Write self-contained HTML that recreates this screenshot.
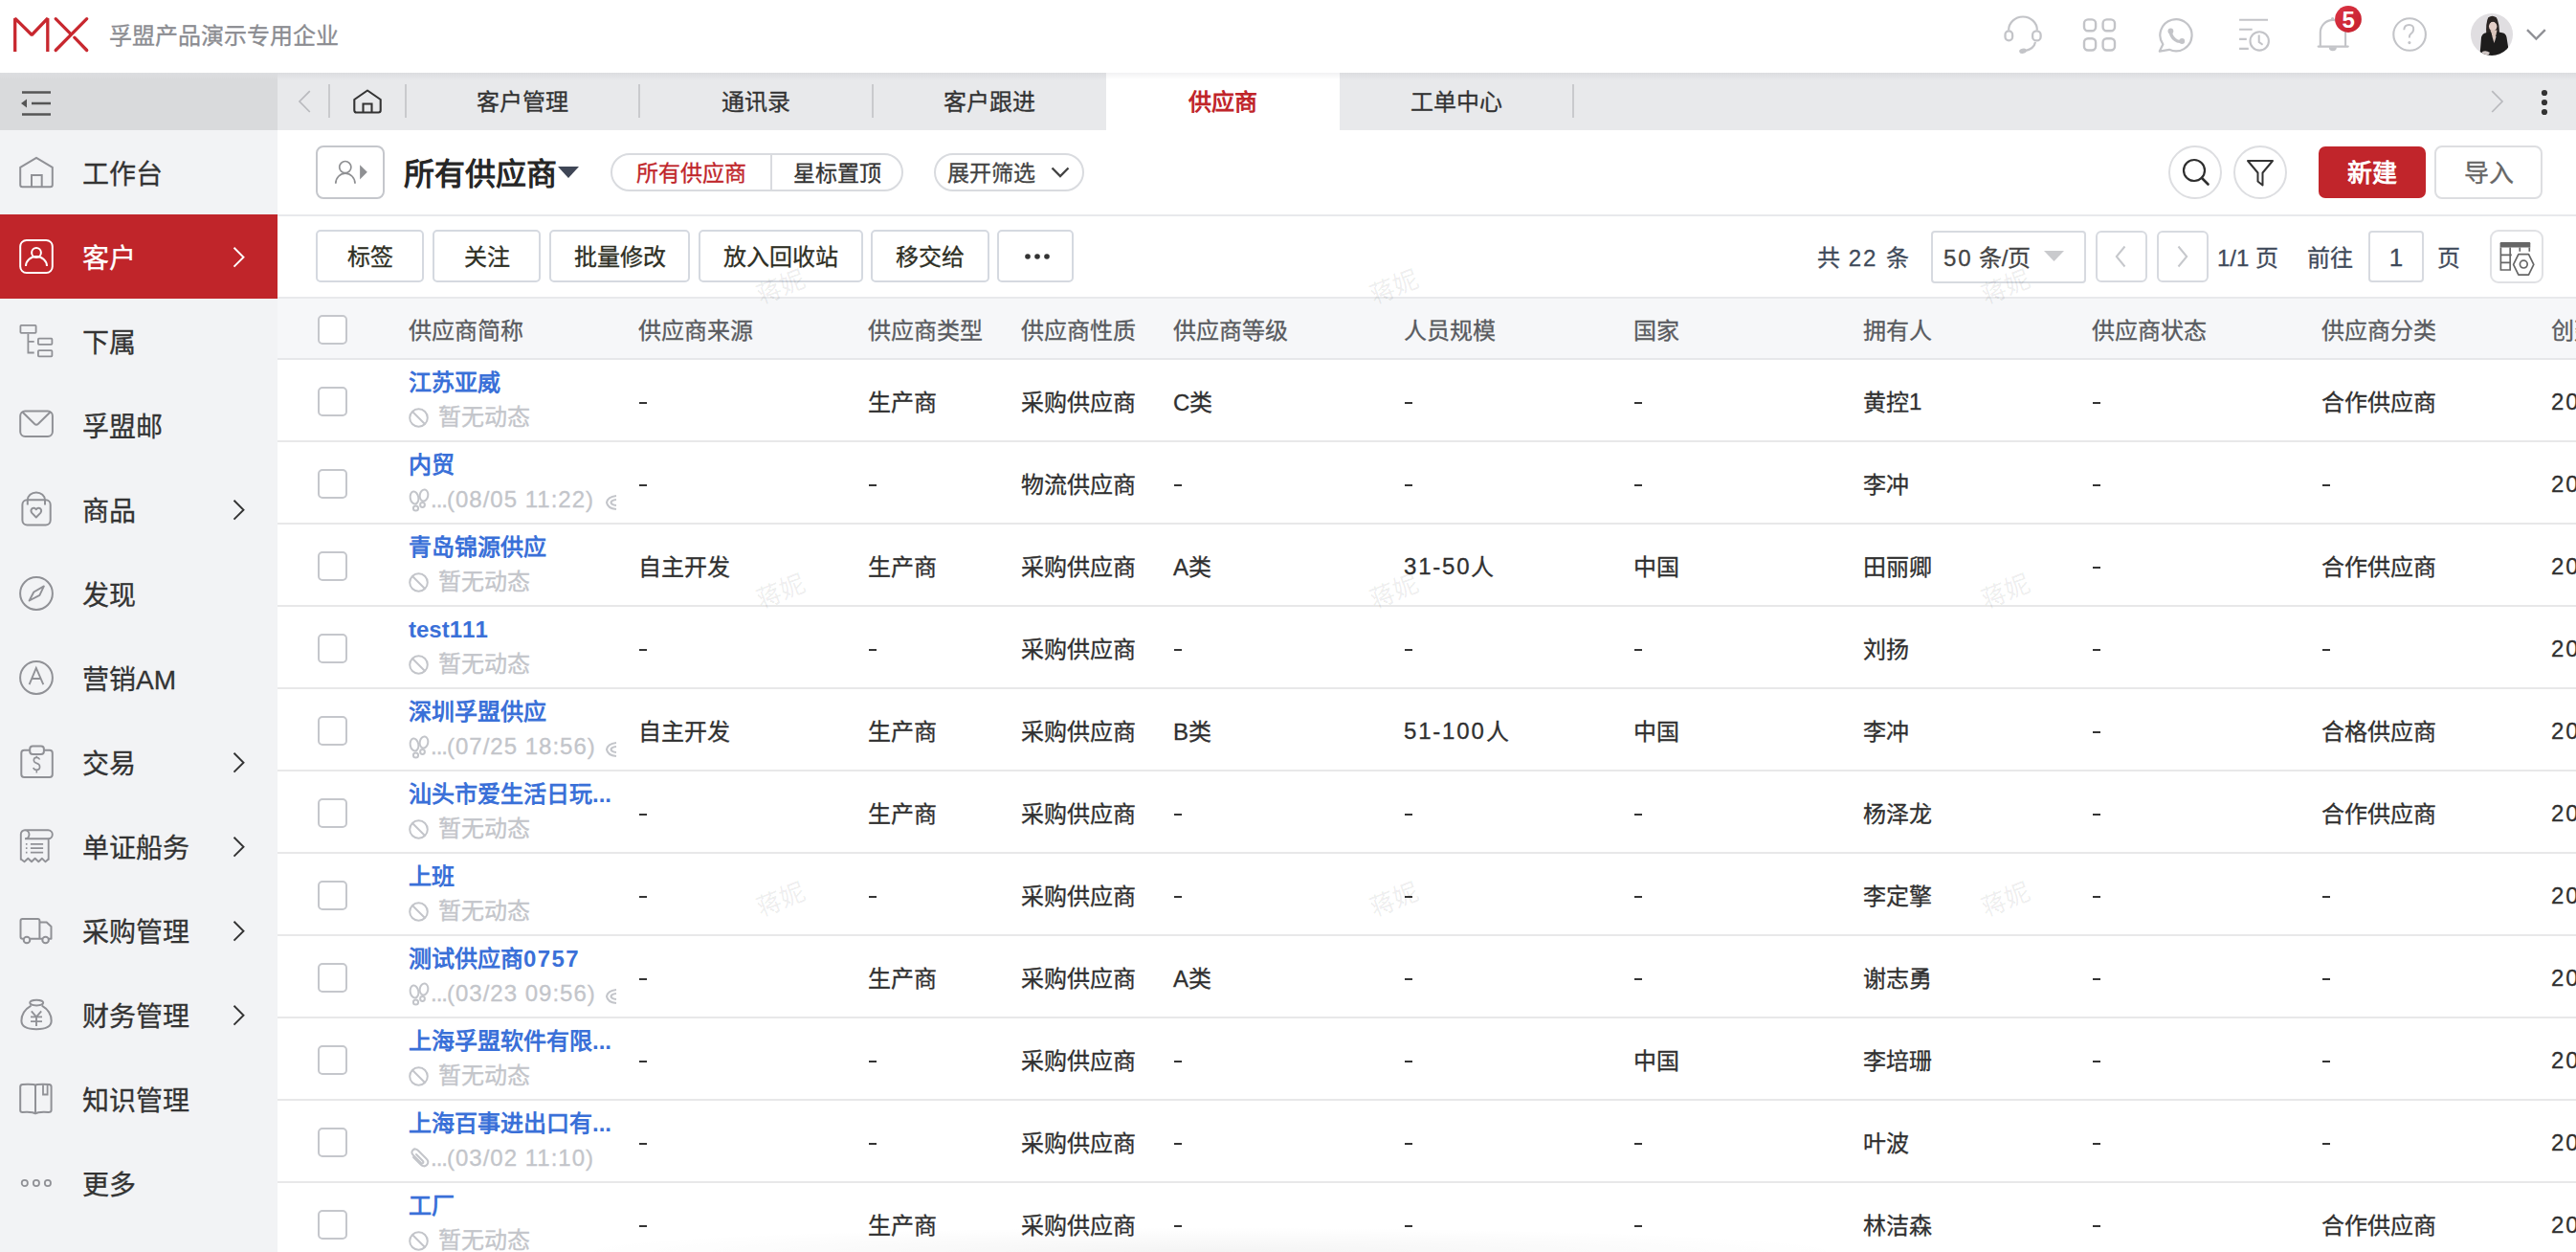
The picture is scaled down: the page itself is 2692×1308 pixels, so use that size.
<!DOCTYPE html>
<html lang="zh-CN">
<head>
<meta charset="utf-8">
<style>
*{margin:0;padding:0;box-sizing:border-box}
html,body{width:2692px;height:1308px;overflow:hidden;background:#fff;font-family:"Liberation Sans",sans-serif;color:#333;-webkit-text-stroke:0.3px currentColor}
.abs{position:absolute}
svg{display:block;overflow:visible}
#hdr{position:absolute;left:0;top:0;width:2692px;height:76px;background:#fff}
#tabs{position:absolute;left:0;top:76px;width:2692px;height:60px;background:#e8e9eb}
#tabs .lft{position:absolute;left:0;top:0;width:290px;height:60px;background:#d9dadc}
#tabs .shade{position:absolute;left:0;top:0;width:2692px;height:8px;background:linear-gradient(#dcdde0,rgba(232,233,235,0))}
.tab{position:absolute;top:1px;height:59px;width:244px;font-size:24px;line-height:60px;text-align:center;color:#333}
.sep{position:absolute;top:12px;width:2px;height:35px;background:#c9cacd}
#side{position:absolute;left:0;top:136px;width:290px;height:1172px;background:#f2f3f5}
.mi{position:absolute;left:0;width:290px;height:88px;font-size:28px;color:#333}
.mi .t{position:absolute;left:86px;top:2.5px;line-height:88px;white-space:nowrap}
.mi svg.ic{position:absolute;left:20px;top:26px}
.mi svg.ch{position:absolute;left:243px;top:34px}
.mi.on{background:#c0252a;color:#fff}

#main{position:absolute;left:290px;top:136px;width:2402px;height:1172px;background:#fff;overflow:hidden}
.pill{position:absolute;border:2px solid #d9dbdf;border-radius:22px;font-size:23px;white-space:nowrap}
.btn{position:absolute;top:104px;height:55px;border:2px solid #d5d9e0;border-radius:5px;font-size:24px;line-height:53px;text-align:center;color:#2e2f24;background:#fff}
.pg{position:absolute;font-size:24px;line-height:30px;color:#3f4a5a;white-space:nowrap;font-weight:500}
.box{position:absolute;border:2px solid #d7dae0;border-radius:5px;background:#fff}
.hd{position:absolute;font-size:24px;line-height:30px;color:#595b60;white-space:nowrap;top:19px}
.row{position:absolute;left:0;width:2402px;height:87px;border-bottom:2px solid #e8e8e9}
.dash{position:absolute;top:45px;width:8px;height:2px;background:#353535}
.cb{position:absolute;left:42px;width:31px;height:31px;border:2px solid #c5c7cc;border-radius:5px;background:#fff}
.c{position:absolute;top:31px;font-size:24px;line-height:30px;color:#303030;white-space:nowrap}
.nm{position:absolute;left:137px;top:10px;font-size:24px;line-height:30px;color:#3a70d8;font-weight:bold;white-space:nowrap}
.dyn{position:absolute;left:137px;top:46px;width:219px;height:32px;overflow:hidden;font-size:24px;line-height:30px;color:#c3c5ca;white-space:nowrap}
.wm{position:absolute;font-size:26px;color:rgba(0,0,0,0.075);transform:rotate(-21deg);white-space:nowrap}
.n2{letter-spacing:2px}.n1{letter-spacing:1px}.n18{letter-spacing:1.8px;position:relative;top:-1px}
.nm,b,[style*="font-weight:bold"]{-webkit-text-stroke:0}
</style>
</head>
<body>
<div id="hdr">
  <svg class="abs" style="left:12px;top:16px" width="84" height="40" viewBox="0 0 84 40">
    <path d="M3.7 38V3.2L21.2 20.5L37.8 3.2V38" fill="none" stroke="#c8282f" stroke-width="3.3" stroke-linejoin="bevel"/>
    <path d="M78.7 3.7L46.2 36.5" fill="none" stroke="#c8282f" stroke-width="3.3" stroke-linecap="round"/>
    <path d="M46.2 3.7L61.3 18.8M65.8 23.2L78.7 36.5" fill="none" stroke="#c8282f" stroke-width="3.3" stroke-linecap="round"/>
  </svg>
  <div class="abs" style="left:114px;top:20px;font-size:24px;line-height:36px;color:#8b8c91;white-space:nowrap">孚盟产品演示专用企业</div>
  <svg class="abs" style="left:2092px;top:16px" width="44" height="42" viewBox="0 0 44 42">
    <path d="M7.1 15.5A14.9 14 0 0 1 36.9 15.5" stroke="#c3c4c8" stroke-width="2.2" fill="none"/>
    <rect x="3.5" y="16.4" width="7.6" height="10" rx="3.8" stroke="#c3c4c8" stroke-width="2.3" fill="none"/>
    <rect x="32.1" y="16.4" width="8.5" height="10" rx="4" stroke="#c3c4c8" stroke-width="2.3" fill="none"/>
    <path d="M35 28Q33.5 35 25 36.8" stroke="#c3c4c8" stroke-width="2.2" fill="none"/>
    <ellipse cx="22" cy="37.2" rx="3.9" ry="2.6" fill="#c3c4c8" transform="rotate(-12 22 37.2)"/>
  </svg>
  <svg class="abs" style="left:2175px;top:18px" width="38" height="38" viewBox="0 0 38 38">
    <rect x="3" y="2.4" width="12.1" height="11.9" rx="4" stroke="#c3c4c8" stroke-width="2.4" fill="none"/>
    <rect x="22.6" y="2.4" width="12.4" height="11.9" rx="4" stroke="#c3c4c8" stroke-width="2.4" fill="none"/>
    <rect x="3" y="22.2" width="12.1" height="12.3" rx="4" stroke="#c3c4c8" stroke-width="2.4" fill="none"/>
    <rect x="22.6" y="22.2" width="12.4" height="12.3" rx="4" stroke="#c3c4c8" stroke-width="2.4" fill="none"/>
  </svg>
  <svg class="abs" style="left:2255px;top:18px" width="38" height="38" viewBox="0 0 38 38">
    <path d="M5.4 28.3A16.6 16.6 0 1 1 12 33.8L1.8 35.6Z" stroke="#c3c4c8" stroke-width="2.2" fill="none" stroke-linejoin="round"/>
    <path d="M13.3 14.6Q13.5 20 18 23.5Q21.5 26.2 25.2 25" stroke="#c3c4c8" stroke-width="3.4" fill="none"/>
    <circle cx="13.4" cy="14.4" r="2.9" fill="#c3c4c8"/><circle cx="25.3" cy="25" r="2.9" fill="#c3c4c8"/>
  </svg>
  <svg class="abs" style="left:2339px;top:18px" width="36" height="38" viewBox="0 0 36 38">
    <path d="M1.1 2.8H31M1.1 12.8H14.7M1.1 22.9H8.8M1.1 32.9H10.8" stroke="#c3c4c8" stroke-width="2.1" fill="none"/>
    <circle cx="22.2" cy="24.9" r="9.7" stroke="#c3c4c8" stroke-width="2.1" fill="none"/>
    <path d="M21.7 18.6V25.9L25.6 28.7" stroke="#c3c4c8" stroke-width="2" fill="none"/>
  </svg>
  <svg class="abs" style="left:2420px;top:16px" width="40" height="40" viewBox="0 0 40 40">
    <path d="M4.8 32.6V18A13.15 13.15 0 0 1 31.1 18V32.6" stroke="#c3c4c8" stroke-width="2.1" fill="none"/>
    <path d="M2.7 32.6H33.7" stroke="#c3c4c8" stroke-width="2.3" stroke-linecap="round"/>
    <path d="M13.8 33.2A4.05 4.05 0 0 0 21.9 33.2Z" fill="#c3c4c8"/>
    <circle cx="17.6" cy="3.6" r="1.6" fill="#c3c4c8"/>
  </svg>
  <svg class="abs" style="left:2439px;top:5px" width="30" height="30" viewBox="0 0 30 30"><defs><linearGradient id="bg5" x1="0" y1="0" x2="1" y2="1"><stop offset="0" stop-color="#dc3545"/><stop offset="1" stop-color="#c41f2c"/></linearGradient></defs><circle cx="15" cy="15" r="13.9" fill="url(#bg5)"/><text x="15.2" y="24.2" font-size="24" font-weight="bold" text-anchor="middle" fill="#fff" font-family="Liberation Sans">5</text></svg>
  <svg class="abs" style="left:2498px;top:16px" width="40" height="40" viewBox="0 0 40 40">
    <circle cx="20.1" cy="20" r="16.8" stroke="#c3c4c8" stroke-width="2.1" fill="none"/>
    <path d="M14.3 15.3Q14.5 9.9 19.6 9.9Q24.3 10 24.2 14.6Q24.1 17.5 21.2 19.5Q19.8 20.6 19.8 23.4" stroke="#c3c4c8" stroke-width="2" fill="none"/>
    <circle cx="19.9" cy="28.6" r="1.55" fill="#c3c4c8"/>
  </svg>
  <svg class="abs" style="left:2582px;top:14px" width="44" height="44" viewBox="0 0 44 44">
    <defs><clipPath id="av"><circle cx="22" cy="22" r="22"/></clipPath></defs>
    <g clip-path="url(#av)">
      <rect width="44" height="44" fill="#e0dee1"/>
      <path d="M16.3 24Q15.5 9 18.3 4.3Q22.5 1.3 26.8 4.3Q30 9 30 24Z" fill="#2b2523"/>
      <ellipse cx="23.2" cy="13.6" rx="4.2" ry="4.9" fill="#e4cfc8"/>
      <path d="M18.6 12.5Q19 5.5 23 5Q27.5 5.5 27.9 12.5Q26 8.5 23 8.3Q20 8.5 18.6 12.5Z" fill="#2b2523"/>
      <path d="M20.5 17.5H27.5L24.5 31Z" fill="#d9c4ba"/>
      <path d="M9.5 44L11 25Q12 21 16 20.2L21 19.2L24.5 31L28 19.2L33 20.2Q36.8 21 37.5 25L40.5 44Z" fill="#1d1c1c"/>
      <path d="M12 40Q16 38 20 41L18 44H11Z" fill="#cfc6c4"/>
    </g>
  </svg>
  <svg class="abs" style="left:2640px;top:30px" width="21" height="13" viewBox="0 0 21 13"><path d="M1 1.2L10.4 10.6L19.8 1.2" stroke="#909196" stroke-width="2.4" fill="none"/></svg>
</div>
<div id="tabs">
  <div class="lft"></div>
  <div class="shade"></div>
  <svg class="abs" style="left:22px;top:95px;top:19px" width="32" height="26" viewBox="0 0 32 26">
    <path d="M1 1.5H31M11 13H31M1 24.5H31" stroke="#555" stroke-width="2.6" fill="none"/>
    <path d="M0 13L6 8.5V17.5Z" fill="#555"/>
  </svg>
  <svg class="abs" style="left:312px;top:18px" width="14" height="24" viewBox="0 0 14 24"><path d="M11.8 1.2L1 12L11.8 23" stroke="#b9babe" stroke-width="1.7" fill="none"/></svg>
  <div class="sep" style="left:343px"></div>
  <svg class="abs" style="left:369px;top:17px" width="31" height="26" viewBox="0 0 31 26"><path d="M1.3 11L15 1.5L28.7 11V22.3Q28.7 24.5 26.5 24.5H3.5Q1.3 24.5 1.3 22.3Z" stroke="#333" stroke-width="2.1" fill="none" stroke-linejoin="round"/><path d="M10.5 24.5V15.5H19.5V24.5" stroke="#333" stroke-width="2.1" fill="none"/></svg>
  <div class="sep" style="left:423px"></div>
  <div class="tab" style="left:424px">客户管理</div>
  <div class="sep" style="left:667px"></div>
  <div class="tab" style="left:668px">通讯录</div>
  <div class="sep" style="left:911px"></div>
  <div class="tab" style="left:912px">客户跟进</div>
  <div class="tab" style="left:1156px;top:0;height:60px;line-height:62px;background:linear-gradient(#f1f1f3,#fff 7px);color:#c0252a;font-weight:bold">供应商</div>
  <div class="tab" style="left:1400px">工单中心</div>
  <div class="sep" style="left:1643px"></div>
  <svg class="abs" style="left:2603px;top:18px" width="14" height="24" viewBox="0 0 14 24"><path d="M1.2 1.2L12 12L1.2 23" stroke="#b9babe" stroke-width="1.7" fill="none"/></svg>
  <svg class="abs" style="left:2655px;top:17px" width="8" height="28" viewBox="0 0 8 28"><circle cx="4" cy="4" r="3.1" fill="#333"/><circle cx="4" cy="14" r="3.1" fill="#333"/><circle cx="4" cy="24" r="3.1" fill="#333"/></svg>
</div>
<div id="side">
<div class="mi" style="top:0px"><svg class="ic" width="36" height="36" viewBox="0 0 36 36"><path d="M1.2 12.8L18 2.8L34.8 12.8V31Q34.8 33.2 32.6 33.2H3.4Q1.2 33.2 1.2 31Z" stroke="#909196" stroke-width="2" fill="none" stroke-linejoin="round"/><path d="M13 33.2V21H23.7V33.2" stroke="#909196" stroke-width="2" fill="none"/></svg><div class="t">工作台</div></div>
<div class="mi on" style="top:88px"><svg class="ic" width="36" height="36" viewBox="0 0 36 36"><rect x="1.2" y="1" width="33.6" height="34" rx="6.5" stroke="#fff" stroke-width="2" fill="none"/><circle cx="18" cy="14" r="4.9" stroke="#fff" stroke-width="2" fill="none"/><path d="M7 28A11 10 0 0 1 29 28" stroke="#fff" stroke-width="2" fill="none"/></svg><div class="t">客户</div><svg class="ch" width="14" height="22" viewBox="0 0 14 22"><path d="M1.5 0.8L11.5 10.7L1.5 20.6" stroke="#fff" stroke-width="1.9" fill="none"/></svg></div>
<div class="mi" style="top:176px"><svg class="ic" width="36" height="36" viewBox="0 0 36 36"><rect x="1.4" y="1.9" width="16.2" height="7.9" rx="0.8" stroke="#909196" stroke-width="1.8" fill="none"/><rect x="19.9" y="15.6" width="14.5" height="6.2" rx="0.8" stroke="#909196" stroke-width="1.8" fill="none"/><rect x="19.9" y="28.2" width="14.5" height="6.2" rx="0.8" stroke="#909196" stroke-width="1.8" fill="none"/><path d="M9.4 10.7V30.5H15.7M9.4 18.8H15.7" stroke="#909196" stroke-width="1.8" fill="none"/></svg><div class="t">下属</div></div>
<div class="mi" style="top:264px"><svg class="ic" width="36" height="36" viewBox="0 0 36 36"><rect x="1.2" y="3.4" width="33.7" height="26.7" rx="5" stroke="#909196" stroke-width="2" fill="none"/><path d="M3.5 4.5L16 16.8Q18 18.6 20 16.8L32.5 4.5" stroke="#909196" stroke-width="2" fill="none"/></svg><div class="t">孚盟邮</div></div>
<div class="mi" style="top:352px"><svg class="ic" width="36" height="36" viewBox="0 0 36 36"><rect x="3.4" y="8.2" width="29.3" height="26.3" rx="5" stroke="#909196" stroke-width="2" fill="none"/><path d="M8.8 13.4V8.5A9.1 8 0 0 1 27 8.5V13.4" stroke="#909196" stroke-width="2" fill="none"/><path d="M17.8 26.5L13.3 21.8Q11.6 19.6 13.2 17.6Q15.6 15.6 17.8 18.3Q20 15.6 22.4 17.6Q24 19.6 22.3 21.8Z" stroke="#909196" stroke-width="1.9" fill="none" stroke-linejoin="round"/></svg><div class="t">商品</div><svg class="ch" width="14" height="22" viewBox="0 0 14 22"><path d="M1.5 0.8L11.5 10.7L1.5 20.6" stroke="#333" stroke-width="1.9" fill="none"/></svg></div>
<div class="mi" style="top:440px"><svg class="ic" width="36" height="36" viewBox="0 0 36 36"><circle cx="18" cy="18" r="16.9" stroke="#909196" stroke-width="2" fill="none"/><path d="M10.6 25.5L15.3 16.5L25.9 10.4L21.4 19.9Z" stroke="#909196" stroke-width="1.9" fill="none" stroke-linejoin="round"/></svg><div class="t">发现</div></div>
<div class="mi" style="top:528px"><svg class="ic" width="36" height="36" viewBox="0 0 36 36"><circle cx="18" cy="18" r="16.9" stroke="#909196" stroke-width="2" fill="none"/><path d="M10.6 25.2L17.8 7.9L25.3 25.2M12.8 19H23" stroke="#909196" stroke-width="1.9" fill="none"/></svg><div class="t">营销AM</div></div>
<div class="mi" style="top:616px"><svg class="ic" width="36" height="36" viewBox="0 0 36 36"><rect x="2.3" y="5.7" width="32.5" height="28.3" rx="3" stroke="#909196" stroke-width="2" fill="none"/><rect x="11.2" y="1.4" width="14.7" height="8.6" rx="3" stroke="#909196" stroke-width="2" fill="#f2f3f5"/><path d="M21.6 15.5Q20.5 13.3 18.2 13.4Q15.2 13.6 15.3 16.3Q15.5 18.7 18.3 19.4Q21.6 20.3 21.6 23.2Q21.5 26.3 18.2 26.4Q15.5 26.4 14.8 24M18.3 11.8V13.4M18.3 26.4V29.5" stroke="#909196" stroke-width="1.6" fill="none"/></svg><div class="t">交易</div><svg class="ch" width="14" height="22" viewBox="0 0 14 22"><path d="M1.5 0.8L11.5 10.7L1.5 20.6" stroke="#333" stroke-width="1.9" fill="none"/></svg></div>
<div class="mi" style="top:704px"><svg class="ic" width="36" height="36" viewBox="0 0 36 36"><path d="M1.8 32.5V5.5A4.2 4.2 0 0 1 6 1.3H30.3A4.5 4.5 0 0 1 30.3 10.3H8M6 1.3A4.5 4.5 0 0 1 6 10.3H8M30.7 10.3V32.5" stroke="#909196" stroke-width="1.9" fill="none"/><path d="M1.8 31.5L5.5 34.3L9.3 30.8L13 34.3L16.6 30.8L20.3 34.3L24 30.8L27.5 34.3L30.7 31.5" stroke="#909196" stroke-width="1.9" fill="none" stroke-linejoin="round"/><path d="M6.9 15.8H8.5M11.9 15.8H25.1M6.9 20.1H8.5M11.9 20.1H25.1M6.9 24.6H8.5M11.9 24.6H25.1" stroke="#909196" stroke-width="1.8" fill="none"/></svg><div class="t">单证船务</div><svg class="ch" width="14" height="22" viewBox="0 0 14 22"><path d="M1.5 0.8L11.5 10.7L1.5 20.6" stroke="#333" stroke-width="1.9" fill="none"/></svg></div>
<div class="mi" style="top:792px"><svg class="ic" width="36" height="36" viewBox="0 0 36 36"><path d="M21.4 26.8H3.5Q1.5 26.8 1.5 24.8V8Q1.5 6 3.5 6H19.4Q21.4 6 21.4 8V26.8M21.4 9.5H28.7L33.5 14V26.8H31M21.4 26.8H24" stroke="#909196" stroke-width="2" fill="none" stroke-linejoin="round"/><circle cx="8" cy="28" r="3.3" stroke="#909196" stroke-width="2" fill="#f2f3f5"/><circle cx="27.6" cy="28" r="3.3" stroke="#909196" stroke-width="2" fill="#f2f3f5"/></svg><div class="t">采购管理</div><svg class="ch" width="14" height="22" viewBox="0 0 14 22"><path d="M1.5 0.8L11.5 10.7L1.5 20.6" stroke="#333" stroke-width="1.9" fill="none"/></svg></div>
<div class="mi" style="top:880px"><svg class="ic" width="36" height="36" viewBox="0 0 36 36"><ellipse cx="18.2" cy="5.6" rx="7" ry="2.9" stroke="#909196" stroke-width="1.9" fill="none"/><path d="M12.5 8.6Q2.4 14.5 2.4 24.5Q2.6 33.2 18 33.2Q33.5 33.2 33.7 24.5Q33.7 14.5 23.8 8.6" stroke="#909196" stroke-width="2" fill="none"/><path d="M12.8 14.3L18 20.3L23.2 14.3M18 20.3V30M12 20.4H24M12 25.1H24" stroke="#909196" stroke-width="1.9" fill="none"/></svg><div class="t">财务管理</div><svg class="ch" width="14" height="22" viewBox="0 0 14 22"><path d="M1.5 0.8L11.5 10.7L1.5 20.6" stroke="#333" stroke-width="1.9" fill="none"/></svg></div>
<div class="mi" style="top:968px"><svg class="ic" width="36" height="36" viewBox="0 0 36 36"><path d="M17 33.3V5Q17 3.3 15 3.1Q9 2.6 3.5 3.1Q1.2 3.4 1.2 5.5V30Q1.2 32 3.5 32Q10 31.5 14 32.3Q17 33.2 17 33.3Q17 33.2 20 32.3Q24 31.5 30.5 32Q33.6 32 33.6 30V5.5Q33.6 3.4 31.3 3.1Q25 2.6 19 3.1Q17 3.3 17 5" stroke="#909196" stroke-width="2" fill="none" stroke-linejoin="round"/><path d="M25 3.2V13.5H29.6V3.2" stroke="#909196" stroke-width="1.8" fill="none"/></svg><div class="t">知识管理</div></div>
<div class="mi" style="top:1056px"><svg class="ic" width="36" height="36" viewBox="0 0 36 36"><circle cx="5.8" cy="18" r="3.1" stroke="#909196" stroke-width="1.8" fill="none"/><circle cx="17.9" cy="18" r="3.1" stroke="#909196" stroke-width="1.8" fill="none"/><circle cx="29.9" cy="18" r="3.1" stroke="#909196" stroke-width="1.8" fill="none"/></svg><div class="t">更多</div></div>
</div>
<div id="main">
  <!-- toolbar 1 -->
  <div class="box" style="left:40px;top:16px;width:72px;height:56px;border-color:#c5c7cc;border-radius:8px">
    <svg class="abs" style="left:18px;top:14px" width="36" height="26" viewBox="0 0 36 26"><circle cx="10.8" cy="6.6" r="6.1" stroke="#8f9093" stroke-width="1.7" fill="none"/><path d="M0.8 23.7A10.1 10.5 0 0 1 21 23.7" stroke="#8f9093" stroke-width="1.7" fill="none"/><path d="M26.1 4.3L33.8 11.8L26.1 19.4Z" fill="#8f9093"/></svg>
  </div>
  <div class="abs" style="left:132px;top:16px;font-size:32px;line-height:60px;font-weight:bold;color:#262626;white-space:nowrap">所有供应商</div>
  <svg class="abs" style="left:293px;top:38px" width="22" height="12" viewBox="0 0 22 12"><path d="M0 0H22L11 12Z" fill="#3f4656"/></svg>
  <div class="pill" style="left:348px;top:24px;width:306px;height:40px">
    <div class="abs" style="left:0;top:1px;width:165px;height:36px;line-height:36px;text-align:center;color:#c0252a">所有供应商</div>
    <div class="abs" style="left:165px;top:0;width:2px;height:36px;background:#d9dbdf"></div>
    <div class="abs" style="left:167px;top:1px;width:135px;height:36px;line-height:36px;text-align:center;color:#333">星标置顶</div>
  </div>
  <div class="pill" style="left:686px;top:24px;width:157px;height:40px">
    <div class="abs" style="left:12px;top:1px;line-height:36px;color:#444">展开筛选</div>
    <svg class="abs" style="left:120px;top:12px" width="20" height="12" viewBox="0 0 20 12"><path d="M1.5 1.5L10 10L18.5 1.5" stroke="#444" stroke-width="2.4" fill="none"/></svg>
  </div>
  <div class="box" style="left:1976px;top:16px;width:56px;height:56px;border-radius:28px;border-color:#dddee1"></div>
  <svg class="abs" style="left:1991px;top:31px" width="30" height="30" viewBox="0 0 30 30"><circle cx="12" cy="11" r="11" stroke="#2e2e2e" stroke-width="2.2" fill="none"/><path d="M20 19L26.5 25.5" stroke="#2e2e2e" stroke-width="2.6" fill="none" stroke-linecap="round"/></svg>
  <div class="box" style="left:2044px;top:16px;width:56px;height:56px;border-radius:28px;border-color:#dddee1"></div>
  <svg class="abs" style="left:2058px;top:31px" width="28" height="28" viewBox="0 0 28 28"><path d="M1 1H27L16.5 13.5V26.5L11.5 22.5V13.5Z" stroke="#333" stroke-width="2" fill="none" stroke-linejoin="round"/></svg>
  <div class="abs" style="left:2133px;top:17px;width:112px;height:54px;border-radius:7px;background:#c1252b;color:#fff;font-weight:bold;font-size:26px;line-height:56px;text-align:center">新建</div>
  <div class="box" style="left:2254px;top:16px;width:113px;height:56px;border-radius:8px;border-color:#dddee1;font-size:26px;line-height:54px;text-align:center;color:#666">导入</div>
  <div class="abs" style="left:0;top:88px;width:2402px;height:2px;background:#e8e9ec"></div>
  <!-- toolbar 2 -->
  <div class="btn" style="left:40px;width:113px">标签</div>
  <div class="btn" style="left:162px;width:113px">关注</div>
  <div class="btn" style="left:284px;width:147px">批量修改</div>
  <div class="btn" style="left:440px;width:172px">放入回收站</div>
  <div class="btn" style="left:620px;width:124px">移交给</div>
  <div class="btn" style="left:752px;width:80px"><svg class="abs" style="left:27px;top:23px" width="26" height="6" viewBox="0 0 26 6"><circle cx="3" cy="3" r="2.8" fill="#333"/><circle cx="13" cy="3" r="2.8" fill="#333"/><circle cx="23" cy="3" r="2.8" fill="#333"/></svg></div>
  <div class="pg" style="left:1609px;top:119px">共<span class="n2"> 22 </span>条</div>
  <div class="box" style="left:1728px;top:105px;width:162px;height:55px;border-radius:4px"></div>
  <div class="pg" style="left:1741px;top:119px;color:#444"><span class="n2">50</span><span style="margin-left:6px">条/页</span></div>
  <svg class="abs" style="left:1846px;top:126px" width="21" height="11" viewBox="0 0 21 11"><path d="M0 0H21L10.5 11Z" fill="#c9cacd"/></svg>
  <div class="box" style="left:1900px;top:105px;width:54px;height:54px;border-radius:6px"></div>
  <svg class="abs" style="left:1920px;top:120px" width="12" height="24" viewBox="0 0 12 24"><path d="M10.5 1.5L1.8 12L10.5 22.5" stroke="#c6c8cc" stroke-width="2" fill="none"/></svg>
  <div class="box" style="left:1964px;top:105px;width:54px;height:54px;border-radius:6px"></div>
  <svg class="abs" style="left:1985px;top:120px" width="12" height="24" viewBox="0 0 12 24"><path d="M1.5 1.5L10.2 12L1.5 22.5" stroke="#c6c8cc" stroke-width="2" fill="none"/></svg>
  <div class="pg" style="left:2027px;top:119px">1/1 页</div>
  <div class="pg" style="left:2121px;top:119px">前往</div>
  <div class="box" style="left:2185px;top:105px;width:58px;height:54px;border-radius:4px;font-size:26px;line-height:52px;text-align:center;color:#3f4a5a">1</div>
  <div class="pg" style="left:2257px;top:119px">页</div>
  <div class="box" style="left:2312px;top:104px;width:56px;height:56px;border-radius:9px;border-color:#e0e1e4"></div>
  <svg class="abs" style="left:2322px;top:117px" width="40" height="40" viewBox="0 0 40 40"><path d="M0.6 1.2Q0.6 0.1 1.8 0.1H31.3Q32.3 0.1 32.3 1.2V5.6H0.6Z" fill="#666"/><path d="M1.4 5.5V29H11.2V5.5M1.4 13.4H12.8M1.4 21.3H11.8M21.3 5.5V9.8M31.3 5.5V9.8" stroke="#666" stroke-width="1.7" fill="none"/><path d="M14.6 23.4L19.9 12.7H30.5L35.8 23.4L30.5 34.1H19.9Z" stroke="#666" stroke-width="1.7" fill="#fff" stroke-linejoin="round"/><circle cx="25.3" cy="23.1" r="3.9" stroke="#666" stroke-width="1.7" fill="none"/></svg>
  <div class="abs" style="left:0;top:174px;width:2402px;height:2px;background:#e8e9ec"></div>
  <!-- table -->

  <div class="abs" style="left:0;top:176px;width:2402px;height:64px;background:#f6f7f9;border-bottom:2px solid #e6e7ea">
    <div class="cb" style="top:17px"></div>
    <div class="hd" style="left:137px">供应商简称</div>
    <div class="hd" style="left:377px">供应商来源</div>
    <div class="hd" style="left:617px">供应商类型</div>
    <div class="hd" style="left:777px">供应商性质</div>
    <div class="hd" style="left:936px">供应商等级</div>
    <div class="hd" style="left:1177px">人员规模</div>
    <div class="hd" style="left:1417px">国家</div>
    <div class="hd" style="left:1657px">拥有人</div>
    <div class="hd" style="left:1896px">供应商状态</div>
    <div class="hd" style="left:2136px">供应商分类</div>
    <div class="hd" style="left:2376px">创建时间</div>
  </div>
<div class="row" style="top:239px"><div class="cb" style="top:29px"></div><div class="nm">江苏亚威</div><div class="dyn"><svg class="abs" style="left:0;top:5px" width="21" height="21" viewBox="0 0 21 21"><circle cx="10.5" cy="10.5" r="9.3" stroke="#c3c5ca" stroke-width="2" fill="none"/><path d="M4 4L17 17" stroke="#c3c5ca" stroke-width="2"/></svg><span style="position:absolute;left:31px;top:0">暂无动态</span></div><div class="dash" style="left:378px"></div><div class="c" style="left:617px">生产商</div><div class="c" style="left:777px">采购供应商</div><div class="c" style="left:936px">C类</div><div class="dash" style="left:1178px"></div><div class="dash" style="left:1418px"></div><div class="c" style="left:1657px">黄控<span class="n18">1</span></div><div class="dash" style="left:1897px"></div><div class="c" style="left:2136px">合作供应商</div><div class="c" style="left:2376px"><span class="n18">2021</span></div></div>
<div class="row" style="top:325px"><div class="cb" style="top:29px"></div><div class="nm">内贸</div><div class="dyn"><svg class="abs" style="left:0;top:4px" width="22" height="24" viewBox="0 0 22 24"><ellipse cx="6" cy="9" rx="4.3" ry="6.5" stroke="#c3c5ca" stroke-width="2" fill="none" transform="rotate(-10 6 9)"/><ellipse cx="16" cy="6.5" rx="4.3" ry="6" stroke="#c3c5ca" stroke-width="2" fill="none" transform="rotate(10 16 6.5)"/><circle cx="7.5" cy="20" r="2.6" stroke="#c3c5ca" stroke-width="2" fill="none"/><circle cx="14.5" cy="16.5" r="2.4" stroke="#c3c5ca" stroke-width="2" fill="none"/></svg><span style="position:absolute;left:23px;top:0;letter-spacing:1px"><span style="letter-spacing:-1px">...</span>(08/05 11:22)</span><svg class="abs" style="left:205px;top:9px" width="20" height="18" viewBox="0 0 20 18"><path d="M12 2Q3 3 2 9Q3 15 12 16M12 6Q7 6.5 6.5 9Q7 11.5 12 12" stroke="#c3c5ca" stroke-width="2" fill="none"/></svg></div><div class="dash" style="left:378px"></div><div class="dash" style="left:618px"></div><div class="c" style="left:777px">物流供应商</div><div class="dash" style="left:937px"></div><div class="dash" style="left:1178px"></div><div class="dash" style="left:1418px"></div><div class="c" style="left:1657px">李冲</div><div class="dash" style="left:1897px"></div><div class="dash" style="left:2137px"></div><div class="c" style="left:2376px"><span class="n18">2021</span></div></div>
<div class="row" style="top:411px"><div class="cb" style="top:29px"></div><div class="nm">青岛锦源供应</div><div class="dyn"><svg class="abs" style="left:0;top:5px" width="21" height="21" viewBox="0 0 21 21"><circle cx="10.5" cy="10.5" r="9.3" stroke="#c3c5ca" stroke-width="2" fill="none"/><path d="M4 4L17 17" stroke="#c3c5ca" stroke-width="2"/></svg><span style="position:absolute;left:31px;top:0">暂无动态</span></div><div class="c" style="left:377px">自主开发</div><div class="c" style="left:617px">生产商</div><div class="c" style="left:777px">采购供应商</div><div class="c" style="left:936px">A类</div><div class="c" style="left:1177px"><span class="n18">31-50</span>人</div><div class="c" style="left:1417px">中国</div><div class="c" style="left:1657px">田丽卿</div><div class="dash" style="left:1897px"></div><div class="c" style="left:2136px">合作供应商</div><div class="c" style="left:2376px"><span class="n18">2021</span></div></div>
<div class="row" style="top:497px"><div class="cb" style="top:29px"></div><div class="nm">test<span style="letter-spacing:1.4px">111</span></div><div class="dyn"><svg class="abs" style="left:0;top:5px" width="21" height="21" viewBox="0 0 21 21"><circle cx="10.5" cy="10.5" r="9.3" stroke="#c3c5ca" stroke-width="2" fill="none"/><path d="M4 4L17 17" stroke="#c3c5ca" stroke-width="2"/></svg><span style="position:absolute;left:31px;top:0">暂无动态</span></div><div class="dash" style="left:378px"></div><div class="dash" style="left:618px"></div><div class="c" style="left:777px">采购供应商</div><div class="dash" style="left:937px"></div><div class="dash" style="left:1178px"></div><div class="dash" style="left:1418px"></div><div class="c" style="left:1657px">刘扬</div><div class="dash" style="left:1897px"></div><div class="dash" style="left:2137px"></div><div class="c" style="left:2376px"><span class="n18">2021</span></div></div>
<div class="row" style="top:583px"><div class="cb" style="top:29px"></div><div class="nm">深圳孚盟供应</div><div class="dyn"><svg class="abs" style="left:0;top:4px" width="22" height="24" viewBox="0 0 22 24"><ellipse cx="6" cy="9" rx="4.3" ry="6.5" stroke="#c3c5ca" stroke-width="2" fill="none" transform="rotate(-10 6 9)"/><ellipse cx="16" cy="6.5" rx="4.3" ry="6" stroke="#c3c5ca" stroke-width="2" fill="none" transform="rotate(10 16 6.5)"/><circle cx="7.5" cy="20" r="2.6" stroke="#c3c5ca" stroke-width="2" fill="none"/><circle cx="14.5" cy="16.5" r="2.4" stroke="#c3c5ca" stroke-width="2" fill="none"/></svg><span style="position:absolute;left:23px;top:0;letter-spacing:1px"><span style="letter-spacing:-1px">...</span>(07/25 18:56)</span><svg class="abs" style="left:205px;top:9px" width="20" height="18" viewBox="0 0 20 18"><path d="M12 2Q3 3 2 9Q3 15 12 16M12 6Q7 6.5 6.5 9Q7 11.5 12 12" stroke="#c3c5ca" stroke-width="2" fill="none"/></svg></div><div class="c" style="left:377px">自主开发</div><div class="c" style="left:617px">生产商</div><div class="c" style="left:777px">采购供应商</div><div class="c" style="left:936px">B类</div><div class="c" style="left:1177px"><span class="n18">51-100</span>人</div><div class="c" style="left:1417px">中国</div><div class="c" style="left:1657px">李冲</div><div class="dash" style="left:1897px"></div><div class="c" style="left:2136px">合格供应商</div><div class="c" style="left:2376px"><span class="n18">2021</span></div></div>
<div class="row" style="top:669px"><div class="cb" style="top:29px"></div><div class="nm">汕头市爱生活日玩...</div><div class="dyn"><svg class="abs" style="left:0;top:5px" width="21" height="21" viewBox="0 0 21 21"><circle cx="10.5" cy="10.5" r="9.3" stroke="#c3c5ca" stroke-width="2" fill="none"/><path d="M4 4L17 17" stroke="#c3c5ca" stroke-width="2"/></svg><span style="position:absolute;left:31px;top:0">暂无动态</span></div><div class="dash" style="left:378px"></div><div class="c" style="left:617px">生产商</div><div class="c" style="left:777px">采购供应商</div><div class="dash" style="left:937px"></div><div class="dash" style="left:1178px"></div><div class="dash" style="left:1418px"></div><div class="c" style="left:1657px">杨泽龙</div><div class="dash" style="left:1897px"></div><div class="c" style="left:2136px">合作供应商</div><div class="c" style="left:2376px"><span class="n18">2021</span></div></div>
<div class="row" style="top:755px"><div class="cb" style="top:29px"></div><div class="nm">上班</div><div class="dyn"><svg class="abs" style="left:0;top:5px" width="21" height="21" viewBox="0 0 21 21"><circle cx="10.5" cy="10.5" r="9.3" stroke="#c3c5ca" stroke-width="2" fill="none"/><path d="M4 4L17 17" stroke="#c3c5ca" stroke-width="2"/></svg><span style="position:absolute;left:31px;top:0">暂无动态</span></div><div class="dash" style="left:378px"></div><div class="dash" style="left:618px"></div><div class="c" style="left:777px">采购供应商</div><div class="dash" style="left:937px"></div><div class="dash" style="left:1178px"></div><div class="dash" style="left:1418px"></div><div class="c" style="left:1657px">李定擎</div><div class="dash" style="left:1897px"></div><div class="dash" style="left:2137px"></div><div class="c" style="left:2376px"><span class="n18">2021</span></div></div>
<div class="row" style="top:841px"><div class="cb" style="top:29px"></div><div class="nm">测试供应商<span style="letter-spacing:1.4px">0757</span></div><div class="dyn"><svg class="abs" style="left:0;top:4px" width="22" height="24" viewBox="0 0 22 24"><ellipse cx="6" cy="9" rx="4.3" ry="6.5" stroke="#c3c5ca" stroke-width="2" fill="none" transform="rotate(-10 6 9)"/><ellipse cx="16" cy="6.5" rx="4.3" ry="6" stroke="#c3c5ca" stroke-width="2" fill="none" transform="rotate(10 16 6.5)"/><circle cx="7.5" cy="20" r="2.6" stroke="#c3c5ca" stroke-width="2" fill="none"/><circle cx="14.5" cy="16.5" r="2.4" stroke="#c3c5ca" stroke-width="2" fill="none"/></svg><span style="position:absolute;left:23px;top:0;letter-spacing:1px"><span style="letter-spacing:-1px">...</span>(03/23 09:56)</span><svg class="abs" style="left:205px;top:9px" width="20" height="18" viewBox="0 0 20 18"><path d="M12 2Q3 3 2 9Q3 15 12 16M12 6Q7 6.5 6.5 9Q7 11.5 12 12" stroke="#c3c5ca" stroke-width="2" fill="none"/></svg></div><div class="dash" style="left:378px"></div><div class="c" style="left:617px">生产商</div><div class="c" style="left:777px">采购供应商</div><div class="c" style="left:936px">A类</div><div class="dash" style="left:1178px"></div><div class="dash" style="left:1418px"></div><div class="c" style="left:1657px">谢志勇</div><div class="dash" style="left:1897px"></div><div class="dash" style="left:2137px"></div><div class="c" style="left:2376px"><span class="n18">2021</span></div></div>
<div class="row" style="top:927px"><div class="cb" style="top:29px"></div><div class="nm">上海孚盟软件有限...</div><div class="dyn"><svg class="abs" style="left:0;top:5px" width="21" height="21" viewBox="0 0 21 21"><circle cx="10.5" cy="10.5" r="9.3" stroke="#c3c5ca" stroke-width="2" fill="none"/><path d="M4 4L17 17" stroke="#c3c5ca" stroke-width="2"/></svg><span style="position:absolute;left:31px;top:0">暂无动态</span></div><div class="dash" style="left:378px"></div><div class="dash" style="left:618px"></div><div class="c" style="left:777px">采购供应商</div><div class="dash" style="left:937px"></div><div class="dash" style="left:1178px"></div><div class="c" style="left:1417px">中国</div><div class="c" style="left:1657px">李培珊</div><div class="dash" style="left:1897px"></div><div class="dash" style="left:2137px"></div><div class="c" style="left:2376px"><span class="n18">2021</span></div></div>
<div class="row" style="top:1013px"><div class="cb" style="top:29px"></div><div class="nm">上海百事进出口有...</div><div class="dyn"><svg class="abs" style="left:0;top:2px;transform:scaleX(-1)" width="22" height="24" viewBox="0 0 22 24"><path d="M17 12L9.5 19.5Q6 23 3 20Q0 17 3.5 13.5L12 5Q15 2 17.5 4.5Q20 7 17 10L9.5 17.5Q8 19 7 18Q6 17 7.5 15.5L14 9" stroke="#c3c5ca" stroke-width="2" fill="none" stroke-linecap="round"/></svg><span style="position:absolute;left:23px;top:0;letter-spacing:1px"><span style="letter-spacing:-1px">...</span>(03/02 11:10)</span></div><div class="dash" style="left:378px"></div><div class="dash" style="left:618px"></div><div class="c" style="left:777px">采购供应商</div><div class="dash" style="left:937px"></div><div class="dash" style="left:1178px"></div><div class="dash" style="left:1418px"></div><div class="c" style="left:1657px">叶波</div><div class="dash" style="left:1897px"></div><div class="dash" style="left:2137px"></div><div class="c" style="left:2376px"><span class="n18">2021</span></div></div>
<div class="row" style="top:1099px"><div class="cb" style="top:29px"></div><div class="nm">工厂</div><div class="dyn"><svg class="abs" style="left:0;top:5px" width="21" height="21" viewBox="0 0 21 21"><circle cx="10.5" cy="10.5" r="9.3" stroke="#c3c5ca" stroke-width="2" fill="none"/><path d="M4 4L17 17" stroke="#c3c5ca" stroke-width="2"/></svg><span style="position:absolute;left:31px;top:0">暂无动态</span></div><div class="dash" style="left:378px"></div><div class="c" style="left:617px">生产商</div><div class="c" style="left:777px">采购供应商</div><div class="dash" style="left:937px"></div><div class="dash" style="left:1178px"></div><div class="dash" style="left:1418px"></div><div class="c" style="left:1657px">林洁森</div><div class="dash" style="left:1897px"></div><div class="c" style="left:2136px">合作供应商</div><div class="c" style="left:2376px"><span class="n18">2021</span></div></div>
<div class="wm" style="left:499px;top:143px">蒋妮</div>
<div class="wm" style="left:499px;top:461px">蒋妮</div>
<div class="wm" style="left:499px;top:783px">蒋妮</div>
<div class="wm" style="left:1140px;top:143px">蒋妮</div>
<div class="wm" style="left:1140px;top:461px">蒋妮</div>
<div class="wm" style="left:1140px;top:783px">蒋妮</div>
<div class="wm" style="left:1779px;top:143px">蒋妮</div>
<div class="wm" style="left:1779px;top:461px">蒋妮</div>
<div class="wm" style="left:1779px;top:783px">蒋妮</div>
<div class="abs" style="left:300px;top:1146px;width:1350px;height:26px;background:radial-gradient(ellipse 50% 100% at 50% 100%,rgba(0,0,0,0.045),rgba(0,0,0,0) 100%);pointer-events:none"></div>
</div>
</body>
</html>
